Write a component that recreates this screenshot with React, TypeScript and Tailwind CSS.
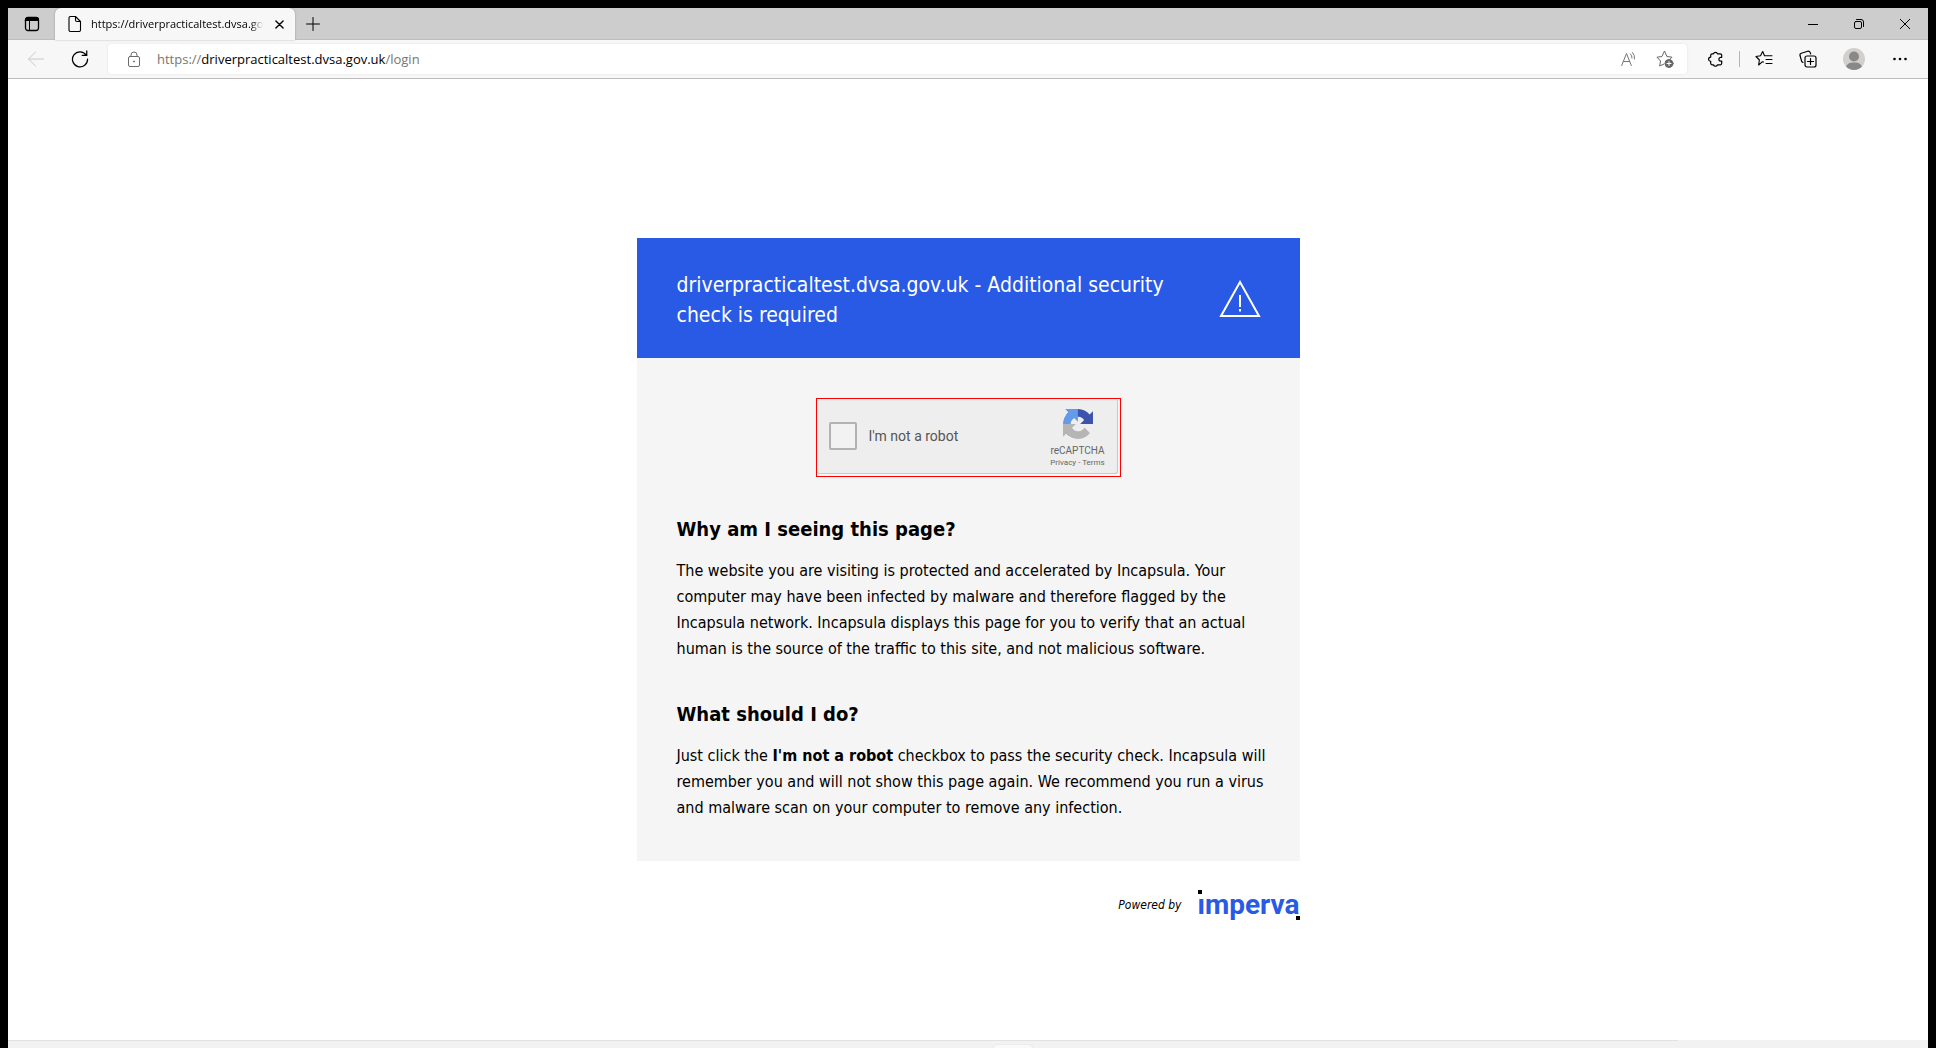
import React from "react";

const ui = "font-['Open_Sans','Noto_Sans',sans-serif]";
const iconButton = "flex size-8 shrink-0 items-center justify-center";

function Svg({ size = 16, box = 16, children, className = "", width = 1 }: { size?: number; box?: number; children: React.ReactNode; className?: string; width?: number }) {
  return (
    <svg width={size} height={size} viewBox={`0 0 ${box} ${box}`} fill="none" stroke="currentColor" strokeWidth={width} strokeLinecap="round" strokeLinejoin="round" className={className} aria-hidden="true">
      {children}
    </svg>
  );
}

function TabBar() {
  return (
    <header className="flex h-8 items-stretch border-b border-[#bebebe] bg-[#cdcdcd] text-black">
      <button aria-label="Tab actions" className="flex w-12 items-center justify-center">
        <Svg>
          <rect x="1.5" y="1.5" width="13" height="13" rx="2.5" strokeWidth="1.3" />
          <path d="M1.5 3.5a2 2 0 0 1 2-2h9a2 2 0 0 1 2 2v1h-13z" fill="currentColor" />
          <path d="M5.500 5v9" />
        </Svg>
      </button>
      <div className="-mb-px -ml-px flex w-60 items-center rounded-t-md bg-[#f7f7f7] pl-3 pr-1 shadow-[0_0_2px_rgba(0,0,0,0.3)]">
        <Svg size={16} className="shrink-0" width={1.1}>
          <path d="M2 2a1.500 1.500 0 0 1 1.500-1.500h5L13.500 5.500V14a1.500 1.500 0 0 1-1.500 1.500H3.500A1.500 1.500 0 0 1 2 14zM8.500.5V4A1.500 1.500 0 0 0 10 5.500h3.500" />
        </Svg>
        <span className="ml-2 w-[174px] overflow-hidden whitespace-nowrap text-[11px] mask-r-from-93%">https://driverpracticaltest.dvsa.gov.uk/login</span>
        <button aria-label="Close tab" className="ml-1 flex size-6 shrink-0 items-center justify-center">
          <Svg size={9} box={10} width={1.500}><path d="M1 1l8 8M9 1l-8 8" /></Svg>
        </button>
      </div>
      <button aria-label="New tab" className="flex w-9 items-center justify-center">
        <Svg><path d="M8 1.500v13M1.500 8h13" /></Svg>
      </button>
      <div className="ml-auto flex">
        <button aria-label="Minimize" className="flex w-[46px] items-center justify-center">
          <Svg size={10} box={10}><path d="M0 5.500h10" /></Svg>
        </button>
        <button aria-label="Restore" className="flex w-[46px] items-center justify-center">
          <Svg size={10} box={10}>
            <rect x=".5" y="2.500" width="7" height="7" rx="1.500" />
            <path d="M2.500.5H7A2.500 2.500 0 0 1 9.500 3v4.500" />
          </Svg>
        </button>
        <button aria-label="Close" className="flex w-[46px] items-center justify-center">
          <Svg size={10} box={10}><path d="M.3.3l9.400 9.400M9.700.3L.3 9.700" /></Svg>
        </button>
      </div>
    </header>
  );
}

function Toolbar() {
  return (
    <nav className="flex h-[39px] items-center border-b border-[#bdbdbd] bg-[#f7f7f7] px-3 text-black">
      <button aria-label="Back" className={`${iconButton} text-[#c8c8c8]`}>
        <Svg><path d="M15.500 8H.7M7.500 1L.5 8l7 7" /></Svg>
      </button>
      <button aria-label="Refresh" className={`${iconButton} ml-3`}>
        <Svg size={18} width={1.100}><path d="M13.500 4.500A6.700 6.700 0 1 0 14.700 8M14 .8v4h-4" /></Svg>
      </button>
      <div className="ml-3 mr-3 flex h-[30px] min-w-0 flex-1 items-center rounded bg-white pl-[18px] pr-[6px] shadow-[0_0_3px_rgba(0,0,0,0.08)]">
        <Svg className="mr-[15px] shrink-0 text-[#6b6b6b]">
          <rect x="2.500" y="5.500" width="11" height="10" rx="1.500" />
          <path d="M5 5.500V4a3 3 0 0 1 6 0v1.500" />
          <circle cx="8" cy="10.500" r=".6" fill="currentColor" />
        </Svg>
        <div className="flex-1 whitespace-nowrap pt-px text-[13px] text-[#767676]">
          https://<span className="text-black">driverpracticaltest.dvsa.gov.uk</span>/login
        </div>
        <button aria-label="Read aloud" className={`${iconButton} mr-1 text-[#767676]`}>
          <Svg><path d="M.7 14.500L5.500 2.500l4.800 12M2.300 10.500h6.400M9.500 3a5 5 0 0 1 1.500 4M11.500 1.500a7.500 7.500 0 0 1 2 6.500" /></Svg>
        </button>
        <button aria-label="Add to favorites" className={`${iconButton} text-[#666]`}>
          <Svg size={18} box={18}>
            <path d="M8 14l-4.300 2 .8-5L1 7.200l4.900-.7L8.500 1l2.400 5.500 5.100.7-2 2" />
            <circle cx="13" cy="13.500" r="4" fill="currentColor" />
            <path d="M13 11.500v4M11 13.500h4" stroke="white" />
          </Svg>
        </button>
      </div>
      <button aria-label="Extensions" className={iconButton}>
        <Svg width={1.200}><path d="M5.200 2.800h1.300a2.100 2.100 0 0 1 4 0h2.700a1.500 1.500 0 0 1 1.500 1.500v2h-.9a1.900 1.900 0 0 0 0 3.800h.9v2.200a1.500 1.500 0 0 1-1.500 1.500h-2.700a2.100 2.100 0 0 1-4 0H5.200a1.500 1.500 0 0 1-1.500-1.500v-2a2.100 2.100 0 0 1 0-4.200V4.300a1.500 1.500 0 0 1 1.500-1.500z" /></Svg>
      </button>
      <span className="mx-2 h-4 w-px bg-[#b5b5b5]" />
      <button aria-label="Favorites" className={iconButton}>
        <Svg size={18} box={18} width={1.100}><path d="M8.500 12l-1-.3-3.900 3.300.8-5L1 6.500l4.500-.7L7.700 1.500l1.800 4.300M9.500 5.800H17M11 9.500h6M11 13.500h6" /></Svg>
      </button>
      <button aria-label="Collections" className={`${iconButton} ml-3`}>
        <Svg size={18} box={18} width={1.200}>
          <rect x="6" y="6" width="11" height="11" rx="2" />
          <path d="M11.500 8.500v6M8.500 11.500h6M4 12.500a2 2 0 0 1-1.300-1.200L1 5.500a2 2 0 0 1 1.300-2.300l6.500-2a2 2 0 0 1 2.300 1.200l.6 1.600" />
        </Svg>
      </button>
      <button aria-label="Profile" className={`${iconButton} ml-[14px]`}>
        <svg width="22" height="22" viewBox="0 0 22 22" aria-hidden="true">
          <circle cx="11" cy="11" r="11" fill="#d2d0ce" />
          <circle cx="11" cy="8.500" r="5" fill="#8a8886" />
          <path d="M3 18.500C5 14.500 8 14.500 11 14.500s6 0 8 4a11 11 0 0 1-16 0z" fill="#8a8886" />
        </svg>
      </button>
      <button aria-label="Settings and more" className={`${iconButton} ml-[14px]`}>
        <svg width="16" height="16" viewBox="0 0 16 16" fill="currentColor" aria-hidden="true">
          <circle cx="2.500" cy="8" r="1.300" /><circle cx="8" cy="8" r="1.300" /><circle cx="13.500" cy="8" r="1.300" />
        </svg>
      </button>
    </nav>
  );
}

function Recaptcha() {
  return (
    <div className="mx-auto w-[305px] border border-[#f00] bg-[#f7f7f7]">
      <div className="mb-[2px] mr-[2px] flex h-[75px] items-center rounded-[3px] border-b border-r border-[#c8c8c8] bg-[#eeeeee] pl-3 font-[Roboto,sans-serif]">
        <label className="flex items-center gap-3 text-sm text-[#555]">
          <input type="checkbox" className="size-7 appearance-none rounded-[2px] border-2 border-[#b2b2b2] bg-[#f2f2f2]" />
          I'm not a robot
        </label>
        <div className="ml-auto flex w-[78px] flex-col items-center pt-[6px] text-[#666]">
          <svg width="30" height="30" viewBox="0 0 64 64" aria-hidden="true">
            <path d="M64 31.955l-.033-1.370V4.687l-7.160 7.160C50.948 4.674 42.033.093 32.050.093c-10.400 0-19.622 4.960-25.458 12.640l11.736 11.860a15.550 15.550 0 0 1 4.754-5.334c2.050-1.600 4.952-2.906 8.968-2.906.485 0 .86.057 1.135.163 4.976.393 9.288 3.140 11.828 7.124l-8.307 8.307L64 31.953" fill="#3c54af" />
            <path d="M31.862.094l-1.370.033H4.594l7.160 7.160C4.580 13.147 0 22.060 0 32.046c0 10.400 4.960 19.622 12.640 25.458L24.500 45.768a15.550 15.550 0 0 1-5.334-4.754c-1.600-2.050-2.906-4.952-2.906-8.968 0-.485.057-.86.163-1.135.393-4.976 3.140-9.288 7.124-11.828l8.307 8.307L31.860.095" fill="#6599e9" />
            <path d="M.001 32.045l.033 1.370v25.898l7.160-7.160c5.860 7.173 14.774 11.754 24.760 11.754 10.400 0 19.622-4.960 25.458-12.640l-11.736-11.860a15.550 15.550 0 0 1-4.754 5.334c-2.050 1.600-4.952 2.906-8.968 2.906-.485 0-.86-.057-1.135-.163-4.976-.393-9.288-3.140-11.828-7.124l8.307-8.307L0 32.047" fill="#b5b5b5" />
          </svg>
          <span className="mt-[6px] text-[10px] leading-3">reCAPTCHA</span>
          <span className="text-[8px] leading-3"><a href="#privacy">Privacy</a> - <a href="#terms">Terms</a></span>
        </div>
      </div>
    </div>
  );
}

function ImpervaLogo() {
  return (
    <div className="relative w-[102px] font-[Roboto,sans-serif] text-[28px] font-bold leading-[30px] text-[#285ae6]">
      imperva
      <span className="absolute left-0 top-0 h-2 w-[7px] bg-white" />
      <span className="absolute left-0 top-0 size-1 bg-black" />
      <span className="absolute bottom-0 right-0 size-1 bg-black" />
    </div>
  );
}

const heading = "mt-9 text-xl font-bold leading-8";
const paragraph = "-mr-4 mt-[13px] text-base leading-[26px]";

export default function App() {
  return (
    <div className="flex min-h-screen flex-col bg-black px-2 pt-2">
      <div className={ui}>
        <TabBar />
        <Toolbar />
      </div>
      <main className="flex-1 bg-white pt-[159px] font-['DejaVu_Sans_Condensed','Noto_Sans',sans-serif] text-black">
        <div className="mx-auto w-full max-w-[663px]">
          <article className="bg-[#f5f5f5]">
            <header className="flex items-center justify-between bg-[#285ae6] pb-[28px] pl-10 pr-[39px] pt-[30px] text-white">
              <h1 className="w-[500px] pt-[2px] text-[21px] leading-[30px]">driverpracticaltest.dvsa.gov.uk - Additional security check is required</h1>
              <svg width="42" height="38" viewBox="0 0 42 38" fill="none" stroke="currentColor" strokeWidth="2" aria-hidden="true">
                <path d="M21 2L40 36H2z" /><path d="M21 15v12M21 29v2.500" />
              </svg>
            </header>
            <div className="px-10 pb-10 pt-10">
              <Recaptcha />
              <h2 className={heading}>Why am I seeing this page?</h2>
              <p className={paragraph}>The website you are visiting is protected and accelerated by Incapsula. Your computer may have been infected by malware and therefore flagged by the Incapsula network. Incapsula displays this page for you to verify that an actual human is the source of the traffic to this site, and not malicious software.</p>
              <h2 className={heading}>What should I do?</h2>
              <p className={paragraph}>Just click the <b>I'm not a robot</b> checkbox to pass the security check. Incapsula will remember you and will not show this page again. We recommend you run a virus and malware scan on your computer to remove any infection.</p>
            </div>
          </article>
          <footer className="mt-[29px] flex items-center justify-end gap-4">
            <span className="text-xs italic">Powered by</span>
            <ImpervaLogo />
          </footer>
        </div>
      </main>
      <div className="relative flex h-2 justify-center bg-[#f2f2f2]">
        <span className="absolute left-0 top-0 h-px w-[87%] bg-[#e2e2e2]" />
        <span className="absolute left-[985px] top-1 h-1 w-10 rounded-t border border-b-0 border-[#ebebeb] bg-[#f9f9f9]" />
      </div>
    </div>
  );
}
